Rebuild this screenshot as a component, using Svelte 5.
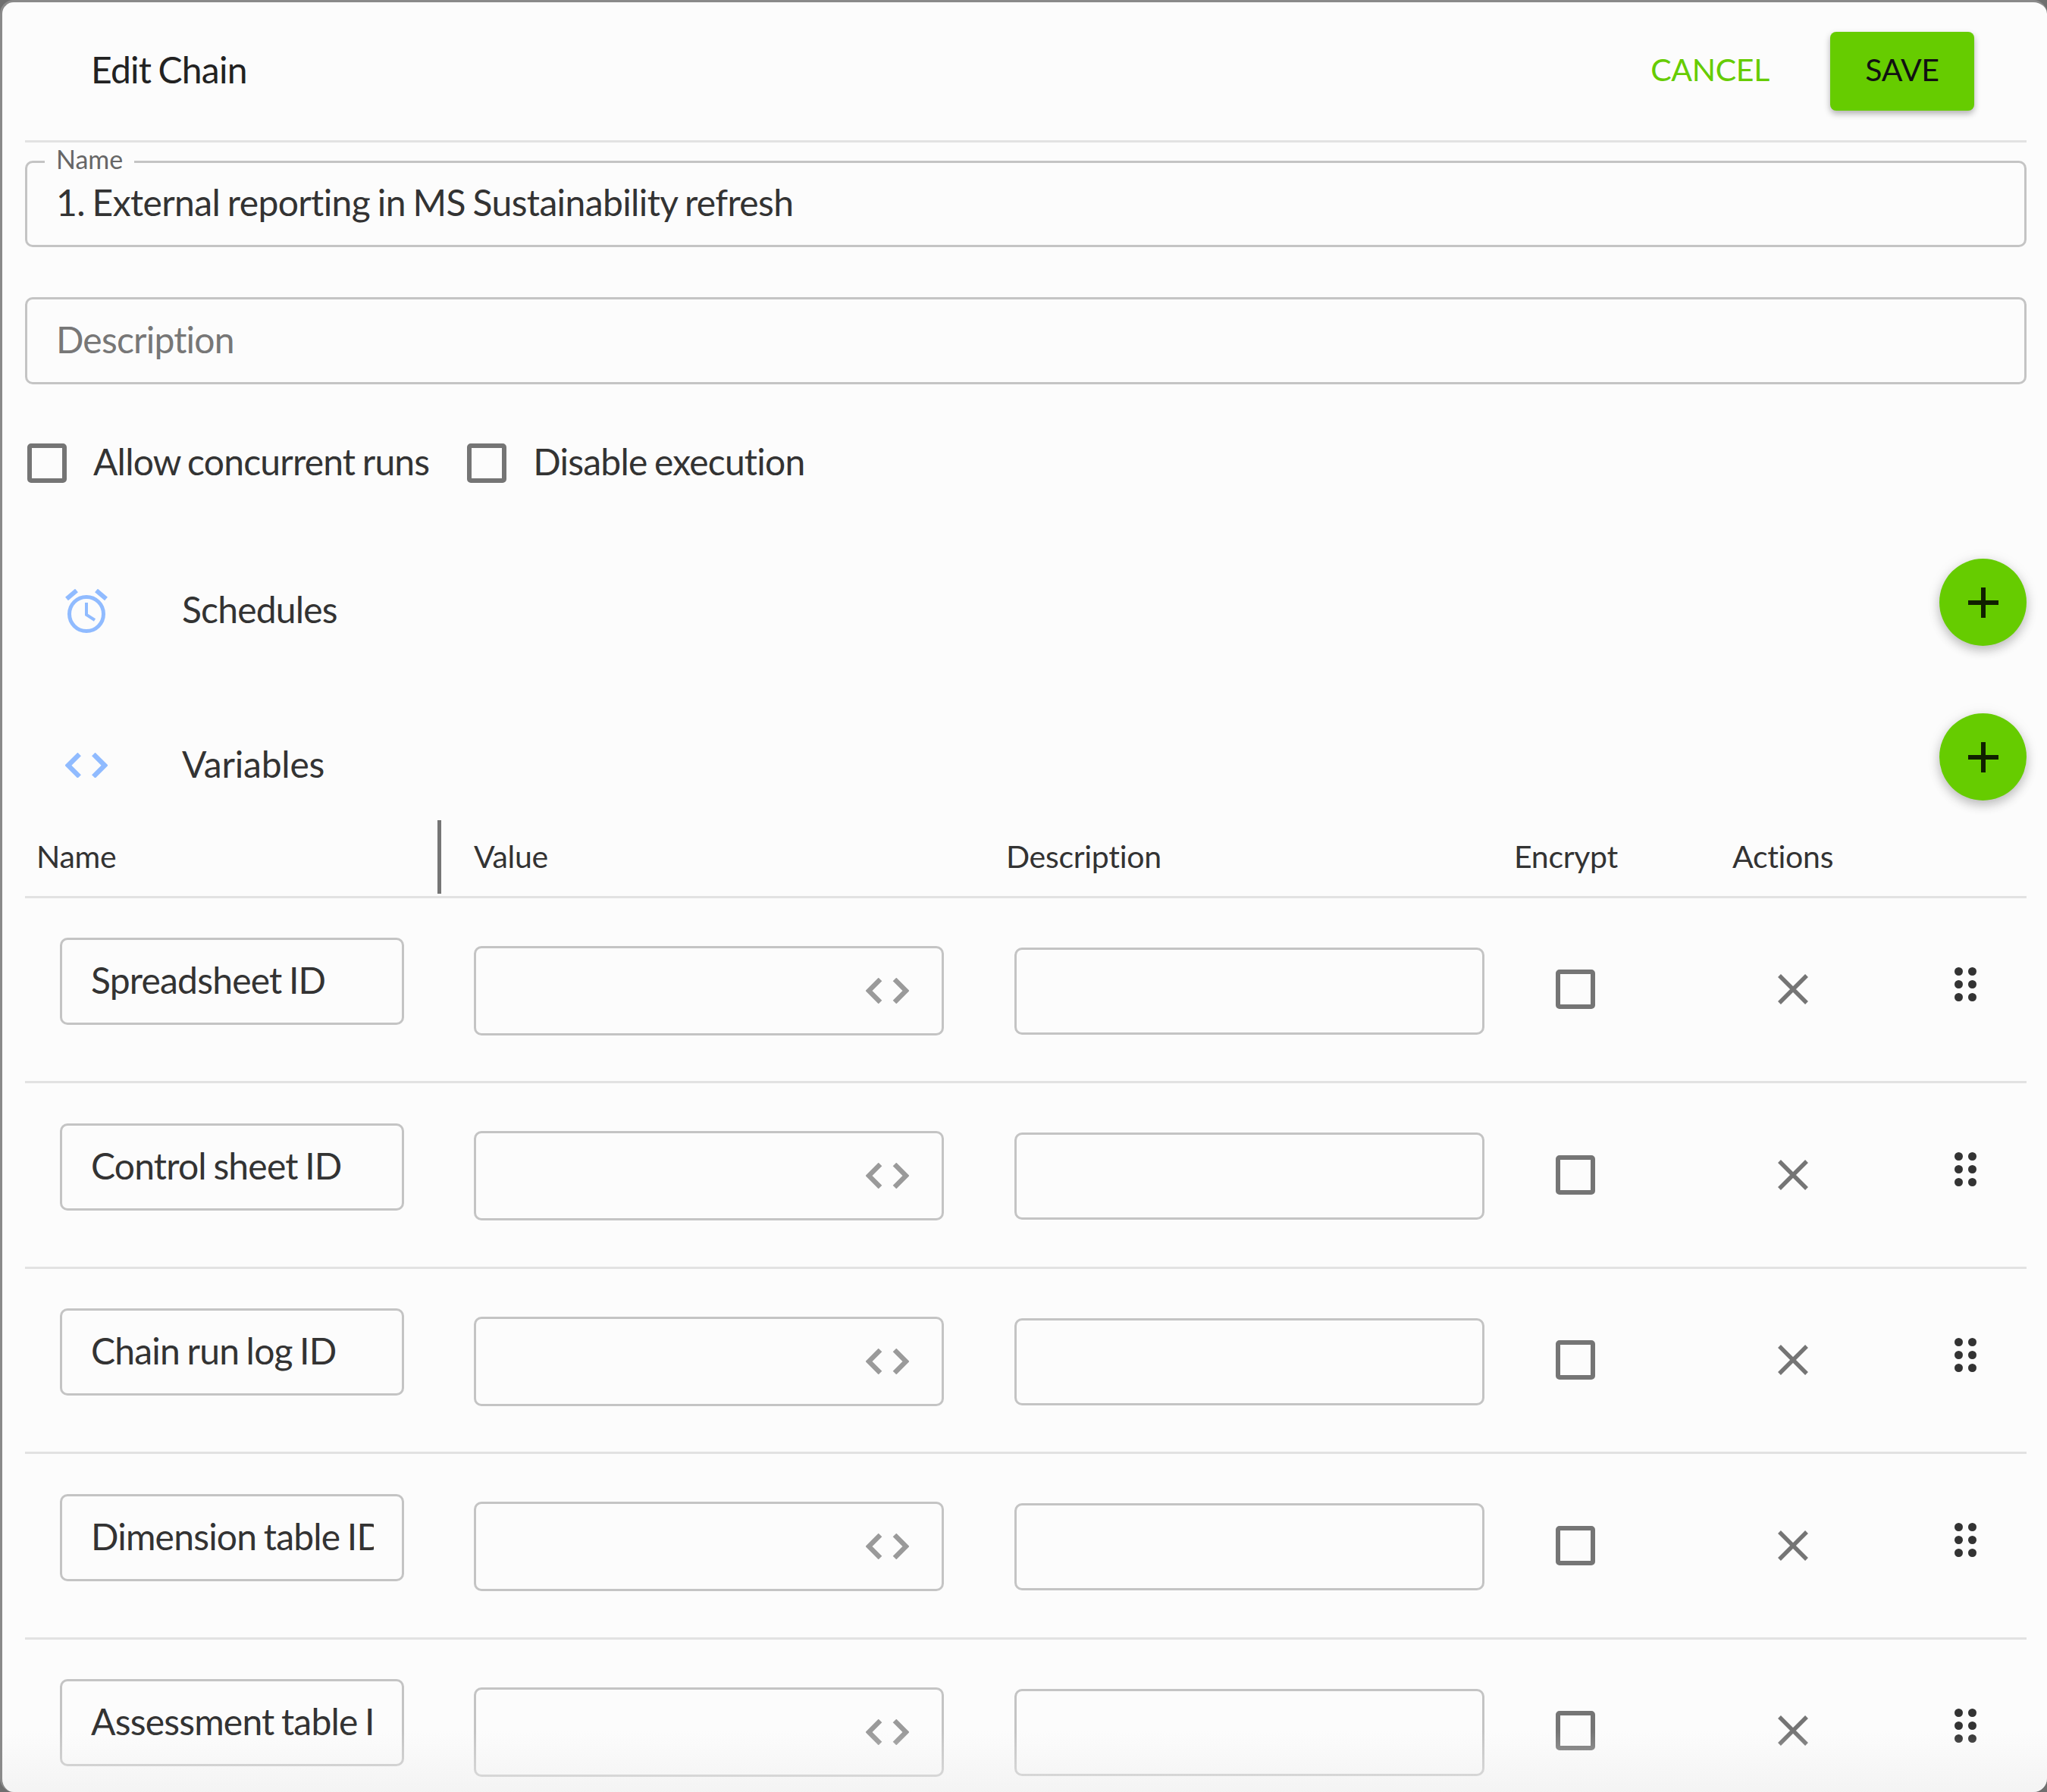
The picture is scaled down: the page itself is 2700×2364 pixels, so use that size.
<script>
  const variables = ['Spreadsheet ID', 'Control sheet ID', 'Chain run log ID', 'Dimension table ID', 'Assessment table ID'];
</script>

{#snippet codeIcon()}
  <svg viewBox="0 0 57 34" fill="none" stroke="currentColor" stroke-width="6.5">
    <path d="M19 2 L4 17 L19 32" />
    <path d="M38 2 L53 17 L38 32" />
  </svg>
{/snippet}

{#snippet plusIcon()}
  <svg viewBox="0 0 40 40" fill="none" stroke="currentColor" stroke-width="6">
    <path d="M0 20 H40 M20 0 V40" />
  </svg>
{/snippet}

<div class="dialog">
  <header class="top">
    <h1>Edit Chain</h1>
    <button class="cancel">CANCEL</button>
    <button class="save">SAVE</button>
  </header>

  <fieldset class="field named">
    <legend>Name</legend>
    <input type="text" value="1. External reporting in MS Sustainability refresh" />
  </fieldset>

  <div class="field plain">
    <input type="text" placeholder="Description" />
  </div>

  <div class="checks">
    <label><input type="checkbox" /><span>Allow concurrent runs</span></label>
    <label><input type="checkbox" /><span>Disable execution</span></label>
  </div>

  <section class="section schedules">
    <span class="section-icon clock">
      <svg viewBox="0 0 56 58" fill="none" stroke="currentColor">
        <circle cx="28" cy="33" r="22.5" stroke-width="5" />
        <path d="M28 18 V34 L39 41" stroke-width="4" />
        <path d="M2 13 L15 2 M54 13 L41 2" stroke-width="6" />
      </svg>
    </span>
    <h2>Schedules</h2>
    <button class="fab" aria-label="Add schedule">{@render plusIcon()}</button>
  </section>

  <section class="section variables">
    <span class="section-icon code">{@render codeIcon()}</span>
    <h2>Variables</h2>
    <button class="fab" aria-label="Add variable">{@render plusIcon()}</button>
  </section>

  <div class="table-head">
    <div class="th name-col">Name</div>
    <div class="th value-col">Value</div>
    <div class="th desc-col">Description</div>
    <div class="th encrypt-col">Encrypt</div>
    <div class="th actions-col">Actions</div>
  </div>

  {#each variables as name}
    <div class="var-row">
      <input class="var-name" type="text" value={name} />
      <div class="var-value">
        <span class="value-icon">{@render codeIcon()}</span>
      </div>
      <input class="var-desc" type="text" />
      <input class="var-encrypt" type="checkbox" />
      <svg class="remove" viewBox="0 0 40 40" fill="none" stroke="currentColor" stroke-width="5.5">
        <path d="M2 2 L38 38 M38 2 L2 38" />
      </svg>
      <svg class="drag" viewBox="0 0 29 45" fill="currentColor">
        <circle cx="5.5" cy="5.5" r="5.5" /><circle cx="23.5" cy="5.5" r="5.5" />
        <circle cx="5.5" cy="22.5" r="5.5" /><circle cx="23.5" cy="22.5" r="5.5" />
        <circle cx="5.5" cy="39.5" r="5.5" /><circle cx="23.5" cy="39.5" r="5.5" />
      </svg>
    </div>
  {/each}

  <div class="bottom-fade"></div>
</div>

<style>
  :global(body) {
    margin: 0;
    background: #6f6f6f;
  }

  .dialog {
    position: relative;
    box-sizing: border-box;
    width: 2700px;
    height: 2364px;
    overflow: hidden;
    padding: 0 27px 0 30px;
    background: #fcfcfc;
    border-top: 3px solid #8a8a8a;
    border-left: 3px solid #8a8a8a;
    border-radius: 18px;
    font-family: Lato, "Open Sans", sans-serif;
    font-size: 48px;
    font-variant-ligatures: none;
    letter-spacing: -0.8px;
    word-spacing: -2px;
    color: #333;
  }

  input {
    letter-spacing: inherit;
    word-spacing: inherit;
  }

  .top {
    display: flex;
    align-items: center;
    box-sizing: border-box;
    height: 185px;
    padding: 0 69px 0 87px;
    border-bottom: 3px solid #e2e2e2;
  }

  h1 {
    flex: 1;
    margin: 0 0 6px;
    font-size: 48px;
    font-weight: 400;
    color: #222;
  }

  button {
    font-family: inherit;
    cursor: pointer;
    border: none;
  }

  .cancel {
    background: none;
    color: #66cc00;
    font-size: 41px;
    letter-spacing: -0.3px;
    padding: 0;
    margin: 0 80px 5px 0;
  }

  .save {
    width: 190px;
    height: 104px;
    padding: 0 0 5px;
    background: #66cc00;
    color: #111;
    font-size: 41px;
    letter-spacing: -0.3px;
    border-radius: 8px;
    box-shadow: 0 4px 8px rgba(0, 0, 0, 0.3);
  }

  .field {
    box-sizing: border-box;
    margin: 0;
    width: 2640px;
    height: 114px;
    padding: 0 38px 6px;
    display: flex;
    align-items: center;
    border: 3px solid #c4c4c4;
    border-radius: 10px;
  }

  .field input {
    width: 100%;
    border: none;
    outline: none;
    background: none;
    padding: 0;
    font: inherit;
    color: #333;
  }

  .field input::placeholder {
    color: #777;
    opacity: 1;
  }

  .named {
    position: relative;
    margin-top: 24px;
  }

  .named input {
    letter-spacing: -0.62px;
  }

  .named legend {
    position: absolute;
    top: -23px;
    left: 23px;
    padding: 0 15px;
    background: #fcfcfc;
    font-size: 34px;
    line-height: 36px;
    letter-spacing: 0;
    color: #666;
  }

  .plain {
    margin-top: 66px;
    height: 115px;
    padding-bottom: 4px;
  }

  .checks {
    display: flex;
    gap: 50px;
    margin-top: 78px;
    height: 51px;
    margin-left: 3px;
  }

  .checks label {
    display: flex;
    align-items: center;
    gap: 35px;
  }

  .checks span {
    margin-bottom: 4px;
  }

  input[type='checkbox'] {
    appearance: none;
    box-sizing: border-box;
    flex: none;
    width: 52px;
    height: 52px;
    margin: 0;
    border: 6px solid #757575;
    border-radius: 5px;
    background: none;
  }

  .section {
    display: flex;
    align-items: center;
    width: 2640px;
    height: 115px;
  }

  .section h2 {
    flex: 1;
    margin: 0;
    padding-top: 18px;
    font-size: 48px;
    font-weight: 400;
  }

  .schedules {
    margin-top: 101px;
  }

  .variables {
    margin-top: 89px;
  }

  .variables h2 {
    letter-spacing: -0.2px;
  }

  .section-icon {
    width: 56px;
    margin: 22px 98px 0 53px;
    color: #90bbff;
    display: flex;
  }

  .section-icon svg {
    width: 100%;
  }

  .fab {
    width: 115px;
    height: 115px;
    flex: none;
    display: flex;
    align-items: center;
    justify-content: center;
    padding: 0;
    border-radius: 50%;
    background: #66cc00;
    color: #102000;
    box-shadow: 0 6px 14px rgba(0, 0, 0, 0.22), 0 2px 20px rgba(0, 0, 0, 0.08);
  }

  .fab svg {
    width: 40px;
    height: 40px;
  }

  .table-head {
    display: flex;
    align-items: flex-start;
    height: 99.5px;
    margin-top: 26px;
    width: 2640px;
    border-bottom: 3px solid #e2e2e2;
    font-size: 41px;
    letter-spacing: -0.3px;
  }

  .th {
    box-sizing: border-box;
    height: 97px;
    line-height: 95px;
  }

  .name-col {
    width: 549px;
    padding-left: 15px;
    border-right: 5px solid #757575;
  }

  .value-col {
    width: 745px;
    padding-left: 43px;
  }

  .desc-col {
    width: 670px;
  }

  .encrypt-col {
    width: 288px;
  }

  .var-row {
    display: grid;
    grid-template-columns: 546px 713px 714px 293px 233px 29px;
    align-items: center;
    height: 241.5px;
    width: 2594px;
    padding-left: 46px;
    border-bottom: 3px solid #e2e2e2;
  }

  .var-name,
  .var-desc,
  .var-value {
    box-sizing: border-box;
    border: 3px solid #c4c4c4;
    border-radius: 10px;
    background: none;
    outline: none;
    font: inherit;
    color: #333;
  }

  .var-name {
    width: 454px;
    height: 115px;
    padding: 0 37px 4px 38px;
    margin-top: -21px;
  }

  .var-value {
    width: 620px;
    height: 118px;
    margin-top: 3px;
    display: flex;
    align-items: center;
    justify-content: flex-end;
    padding-right: 43px;
  }

  .value-icon {
    width: 57px;
    color: #9a9a9a;
    display: flex;
  }

  .value-icon svg {
    width: 100%;
  }

  .var-desc {
    width: 620px;
    height: 115px;
    margin-top: 4px;
  }

  .remove {
    width: 40px;
    height: 40px;
    color: #757575;
  }

  .drag {
    width: 29px;
    height: 45px;
    color: #333;
    margin-top: -14px;
  }

  .bottom-fade {
    position: absolute;
    left: 0;
    right: 0;
    bottom: 0;
    height: 80px;
    background: linear-gradient(to bottom, rgba(238, 238, 238, 0), rgba(238, 238, 238, 0.6));
    pointer-events: none;
  }
</style>
